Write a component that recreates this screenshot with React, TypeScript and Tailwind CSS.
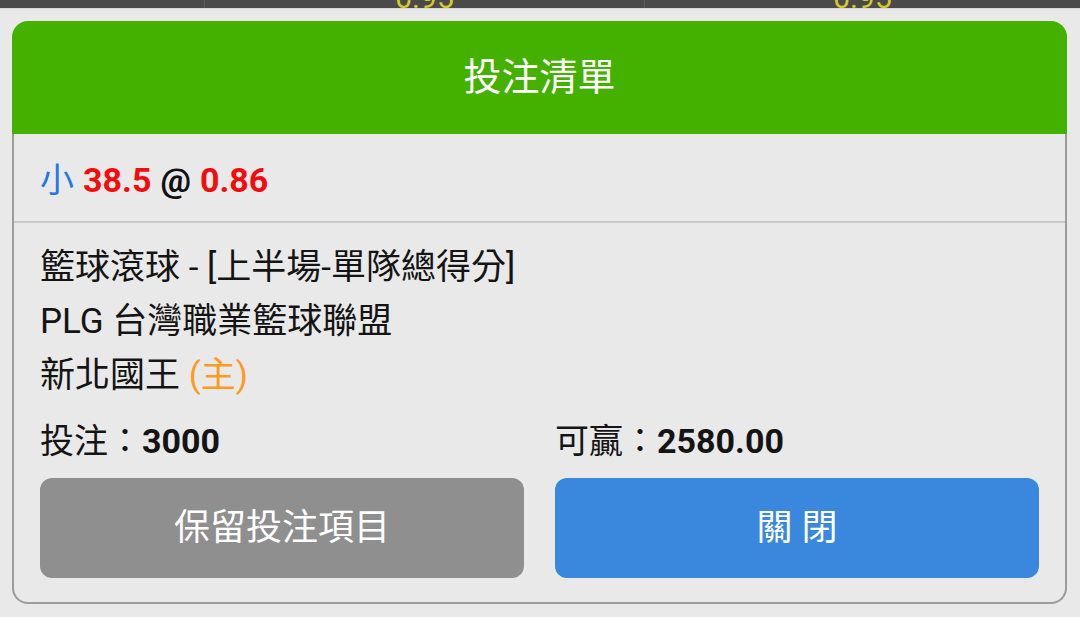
export default function App() {
  return (
    <div className="min-h-[617px] w-[1080px] bg-[#e9e9e9] font-['Roboto','Noto_Sans_CJK_TC',sans-serif] text-[#141414]">
      {/* odds bar behind the sheet, mostly scrolled off */}
      <div className="flex h-[9px] overflow-hidden border-b border-[#d6d6d6] bg-[#4a4a4a]">
        <div className="w-[205px] border-r border-[#5c5c5c]" />
        <div className="flex w-[440px] items-end justify-center border-r border-[#5c5c5c]">
          <span className="-mb-[5px] text-[30px] leading-none text-[#d9c82c]">0.95</span>
        </div>
        <div className="flex flex-1 items-end justify-center">
          <span className="-mb-[5px] text-[30px] leading-none text-[#d9c82c]">0.95</span>
        </div>
      </div>

      <div className="ml-[12px] mr-[13px] mt-[12px]">
        <div className="flex h-[113px] items-center justify-center rounded-t-[16px] bg-[#44b000] text-[38px] text-white">
          投注清單
        </div>

        <div className="rounded-b-[16px] border-x-2 border-b-2 border-[#9c9c9c]">
          <div className="flex h-[87px] items-center px-[26px] pt-[5px] text-[34px]">
            <span className="text-[#1f78e6]">小</span>
            <span className="ml-[9px] font-bold text-[#f20d0d]">38.5</span>
            <span className="ml-[9px] font-bold text-[#111]">@</span>
            <span className="ml-[9px] font-bold text-[#f20d0d]">0.86</span>
          </div>
          <div className="h-[2px] bg-[#c9c9c9]" />

          <div className="px-[26px] pb-[24px] pt-[18px] text-[35px] leading-[54px]">
            <div>籃球滾球 - [上半場-單隊總得分]</div>
            <div>PLG 台灣職業籃球聯盟</div>
            <div>
              新北國王 <span className="text-[#ff9a1e]">(主)</span>
            </div>

            <div className="mt-[11px] grid grid-cols-2 gap-x-[31px] text-[34px]">
              <div>
                投注：<span className="font-bold">3000</span>
              </div>
              <div>
                可贏：<span className="font-bold">2580.00</span>
              </div>
            </div>

            <div className="mt-[10px] grid grid-cols-2 gap-x-[31px]">
              <button className="h-[100px] rounded-[12px] bg-[#8f8f8f] text-[36px] text-white">
                保留投注項目
              </button>
              <button className="h-[100px] rounded-[12px] bg-[#3a87de] text-[36px] text-white">
                關 閉
              </button>
            </div>
          </div>
        </div>
      </div>
    </div>
  )
}
